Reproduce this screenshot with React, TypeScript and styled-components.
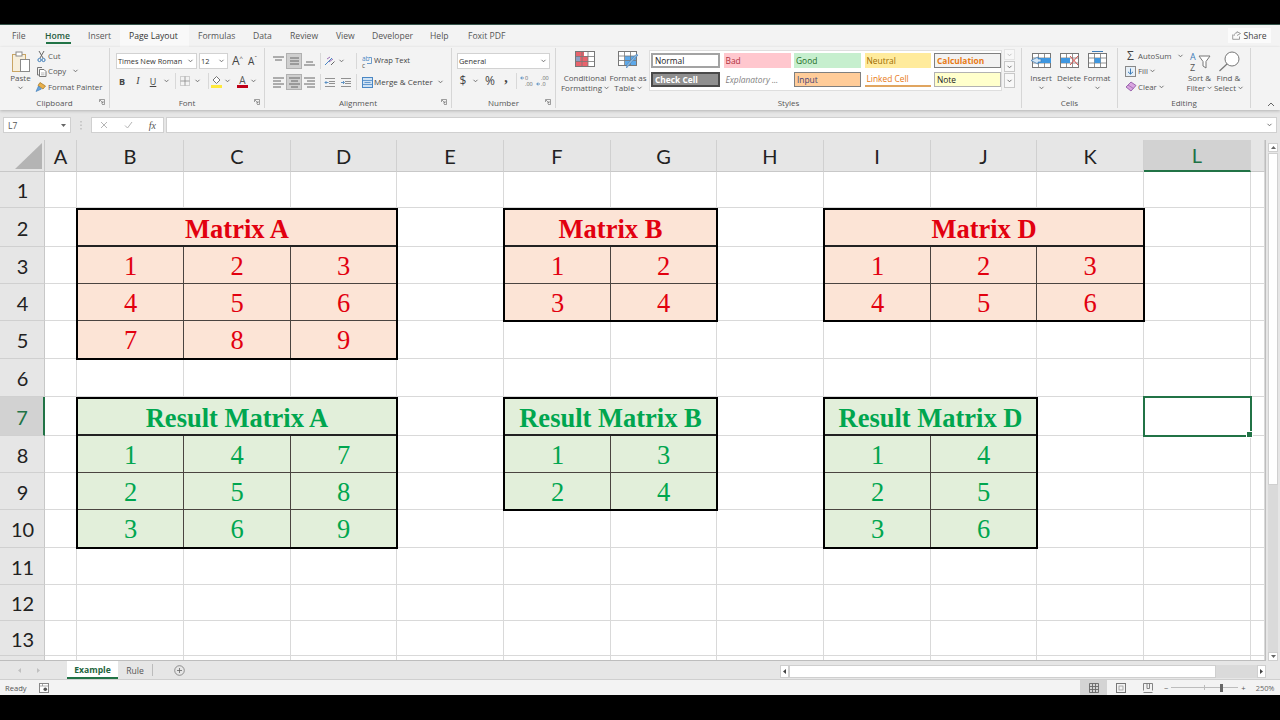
import React from "react";
import styled, { createGlobalStyle } from "styled-components";

const UI_FONT = `"Open Sans", "Noto Sans", sans-serif`;

const GlobalStyle = createGlobalStyle`
  html, body {
    margin: 0;
    padding: 0;
    background: #000;
    overflow: hidden;
  }
  * {
    box-sizing: border-box;
  }
`;

const Page = styled.div`
  width: 1280px;
  height: 720px;
  background: #000;
  padding: 24px 0 25px;
  display: flex;
  flex-direction: column;
  overflow: hidden;
  font-family: ${UI_FONT};
  font-size: 8.5px;
  color: #444;
`;

/* ---------- tabs ---------- */

const TabRow = styled.div`
  height: 23px;
  flex: none;
  background: #f3f3f3;
  border-top: 1px solid #35544a;
  padding-left: 2.5px;
  display: flex;
  align-items: stretch;
  position: relative;
`;

const Tab = styled.div<{ $w: number; $active?: boolean; $hover?: boolean }>`
  width: ${(p) => p.$w}px;
  padding-left: 9.5px;
  display: flex;
  align-items: center;
  font-size: 8.6px;
  white-space: nowrap;
  position: relative;
  color: ${(p) => (p.$active ? "#1f5c3c" : p.$hover ? "#333" : "#555")};
  background: ${(p) => (p.$hover ? "#f9f9f9" : "transparent")};
  font-weight: ${(p) => (p.$active ? 600 : 400)};

  ${(p) =>
    p.$active &&
    `&::after {
      content: "";
      position: absolute;
      left: 10px;
      width: 25px;
      top: 17px;
      height: 2px;
      background: #217346;
    }`}
`;

const ShareButton = styled.div`
  position: absolute;
  right: 9px;
  top: 3px;
  width: 43px;
  height: 15px;
  background: #fbfbfb;
  color: #444;
  display: flex;
  align-items: center;
  justify-content: center;
  gap: 2px;
  font-size: 8.6px;
`;

/* ---------- ribbon ---------- */

const Ribbon = styled.div`
  height: 63px;
  flex: none;
  background: #f3f3f3;
  padding: 1px 0 2px;
  display: flex;
  position: relative;
  z-index: 2;
  box-shadow: 0 1px 3px rgba(0, 0, 0, 0.22);
`;

const Group = styled.section<{ $w: number; $last?: boolean }>`
  width: ${(p) => p.$w}px;
  flex: none;
  display: flex;
  flex-direction: column;
  position: relative;
  border-right: ${(p) => (p.$last ? "none" : "1px solid #d6d6d6")};
`;

const GroupBody = styled.div<{ $pad?: number }>`
  flex: 1;
  min-height: 0;
  display: flex;
  padding-left: ${(p) => p.$pad ?? 0}px;
`;

const GroupLabel = styled.div`
  height: 11px;
  flex: none;
  line-height: 12px;
  text-align: center;
  color: #555;
  font-size: 8px;
  position: relative;
`;

const Launcher = styled.svg`
  position: absolute;
  right: 4px;
  top: 2px;
`;

const Stack = styled.div<{ $top?: number; $gap?: number }>`
  display: flex;
  flex-direction: column;
  padding-top: ${(p) => p.$top ?? 5}px;
  gap: ${(p) => p.$gap ?? 5}px;
`;

const Row = styled.div<{ $h?: number }>`
  display: flex;
  align-items: center;
  height: ${(p) => p.$h ?? 16}px;
  white-space: nowrap;
`;

const Slot = styled.span<{ $w: number; $on?: boolean }>`
  width: ${(p) => p.$w}px;
  height: 16px;
  flex: none;
  display: flex;
  align-items: center;
  justify-content: center;
  background: ${(p) => (p.$on ? "#cfcfcf" : "transparent")};
  border: ${(p) => (p.$on ? "1px solid #b0b0b0" : "none")};
`;

const Divider = styled.span`
  width: 1px;
  height: 16px;
  flex: none;
  background: #d8d8d8;
`;

const BigButton = styled.div<{ $w: number }>`
  width: ${(p) => p.$w}px;
  flex: none;
  display: flex;
  flex-direction: column;
  align-items: center;
  padding-top: 3px;
  text-align: center;
  line-height: 10px;
  font-size: 8px;
  color: #555;
  white-space: nowrap;
`;

const BigIcon = styled.div`
  height: 20px;
  margin-bottom: 2px;
  display: flex;
  align-items: flex-start;
`;

const LabelLine = styled.div`
  height: 10px;
  display: flex;
  align-items: center;
  justify-content: center;
  gap: 2px;
`;

const SmallTools = styled.div<{ $w: number; $left?: number }>`
  width: ${(p) => p.$w}px;
  flex: none;
  margin-left: ${(p) => p.$left ?? 0}px;
  display: flex;
  flex-direction: column;
`;

const SmallTool = styled.div`
  height: 15.5px;
  display: flex;
  align-items: center;
  gap: 2px;
  white-space: nowrap;
  font-size: 7.8px;
  color: #555;
`;

const SelectBox = styled.div<{ $w: number }>`
  width: ${(p) => p.$w}px;
  height: 16px;
  background: #fff;
  border: 1px solid #d2d2d2;
  margin-right: 2px;
  padding: 0 3px 0 1px;
  display: flex;
  align-items: center;
  justify-content: space-between;
  color: #333;
  font-size: 7.4px;
  white-space: nowrap;
  overflow: hidden;
`;

const Glyph = styled.span<{ $size?: number; $bold?: boolean; $italic?: boolean; $under?: boolean; $serif?: boolean; $lift?: number }>`
  font-size: ${(p) => p.$size ?? 9}px;
  font-weight: ${(p) => (p.$bold ? 700 : 400)};
  font-style: ${(p) => (p.$italic ? "italic" : "normal")};
  text-decoration: ${(p) => (p.$under ? "underline" : "none")};
  font-family: ${(p) => (p.$serif ? `"Liberation Serif", serif` : UI_FONT)};
  color: #444;
  line-height: 1;
  position: relative;
  top: ${(p) => p.$lift ?? 0}px;
`;

const Gallery = styled.div`
  width: 353px;
  height: 41px;
  margin-top: 2px;
  background: #fff;
  border: 1px solid #dedede;
  padding: 2px 0 0 1px;
  display: grid;
  grid-template-columns: 69px 67px 67px 66px 67px;
  grid-auto-rows: 15px;
  column-gap: 3.5px;
  row-gap: 4px;
`;

type Look = "normal" | "bad" | "good" | "neutral" | "calc" | "check" | "expl" | "input" | "linked" | "note";

const looks: Record<Look, string> = {
  normal: "background:#fff;color:#222;border:2px solid #a3a3a3;",
  bad: "background:#ffc7ce;color:#b0303c;",
  good: "background:#c6efce;color:#1c6b24;",
  neutral: "background:#ffeb9c;color:#9c6a00;",
  calc: "background:#f2f2f2;color:#e87a14;font-weight:700;border:1px solid #7f7f7f;",
  check: "background:#8f8f8f;color:#fff;font-weight:700;border:2px solid #4a4a4a;",
  expl: "background:#fff;color:#7f7f7f;font-style:italic;",
  input: "background:#ffcc99;color:#3f3f76;border:1px solid #7f7f7f;",
  linked: "background:#fff;color:#e87a14;border-bottom:2px solid #e0a560;",
  note: "background:#ffffcc;color:#222;border:1px solid #b2b2b2;",
};

const StyleCell = styled.div<{ $look: Look }>`
  font-size: 8.4px;
  padding-left: 2px;
  display: flex;
  align-items: center;
  white-space: nowrap;
  overflow: hidden;
  ${(p) => looks[p.$look]}
`;

const GalleryScroll = styled.div`
  width: 11px;
  margin: 1px 0 0 2px;
  display: flex;
  flex-direction: column;
  gap: 1px;
`;

const GalleryBtn = styled.div<{ $h: number; $dim?: boolean }>`
  height: ${(p) => p.$h}px;
  background: #f8f8f8;
  border: 1px solid ${(p) => (p.$dim ? "#e4e4e4" : "#c8c8c8")};
  display: flex;
  align-items: center;
  justify-content: center;
`;

const Collapse = styled.div`
  flex: 1;
  display: flex;
  align-items: flex-end;
  justify-content: flex-end;
  padding: 0 5px 1px 0;
`;

/* ---------- formula bar ---------- */

const FormulaBar = styled.div`
  height: 30px;
  flex: none;
  background: #e6e6e6;
  padding: 7px 3px 7px 3px;
  display: flex;
  align-items: stretch;
`;

const FieldBox = styled.div<{ $w?: number }>`
  ${(p) => (p.$w ? `width:${p.$w}px;flex:none;` : "flex:1;")}
  background: #fff;
  border: 1px solid #d0d0d0;
  display: flex;
  align-items: center;
  justify-content: space-between;
  padding: 0 4px;
  color: #555;
  font-size: 8.5px;
`;

const FxBox = styled(FieldBox)`
  margin-right: 2px;
`;

const GripSlot = styled.div`
  width: 20px;
  flex: none;
  display: flex;
  align-items: center;
  justify-content: center;
`;

const FxTools = styled.div`
  width: 100%;
  padding: 0 3px 0 4px;
  display: flex;
  justify-content: space-between;
  align-items: center;
`;

const FxText = styled.span`
  font-family: "Liberation Serif", serif;
  font-style: italic;
  font-size: 10px;
  color: #555;
`;

/* ---------- sheet ---------- */

const SheetArea = styled.div`
  flex: 1;
  min-height: 0;
  display: flex;
  background: #e6e6e6;
`;

const SheetGrid = styled.div`
  width: 1266px;
  height: 521px;
  flex: none;
  display: grid;
  grid-template-columns: 45px 32px 107px 107px 106px 107px 107px 106px 107px 107px 106px 107px 107px 14px;
  grid-template-rows: 32px 36px 39px 37px 37px 38px 38px 39px 37px 37px 38px 37px 36px 35px 5px;
  background: #fff;
  border-right: 1px solid #bdbdbd;
  border-bottom: 1px solid #bdbdbd;
  overflow: hidden;
`;

const Corner = styled.div`
  grid-column: 1;
  grid-row: 1;
  background: #e6e6e6;
  border-right: 1px solid #c8c8c8;
  border-bottom: 1px solid #c8c8c8;
  display: flex;
  align-items: flex-end;
  justify-content: flex-end;
  padding: 0 2px 2px 0;
`;

const ColHead = styled.div<{ $col: number; $on?: boolean }>`
  grid-column: ${(p) => p.$col};
  grid-row: 1;
  background: ${(p) => (p.$on ? "#d2d2d2" : "#e6e6e6")};
  color: ${(p) => (p.$on ? "#217346" : "#222")};
  border-right: 1px solid ${(p) => (p.$on ? "#d2d2d2" : "#d0d0d0")};
  border-bottom: ${(p) => (p.$on ? "2px solid #217346" : "1px solid #c8c8c8")};
  font-family: Lato, "Open Sans", sans-serif;
  font-size: 20px;
  display: flex;
  align-items: center;
  justify-content: center;
`;

const RowHead = styled.div<{ $row: number; $on?: boolean }>`
  grid-column: 1;
  grid-row: ${(p) => p.$row};
  background: ${(p) => (p.$on ? "#d2d2d2" : "#e6e6e6")};
  color: ${(p) => (p.$on ? "#217346" : "#222")};
  border-right: ${(p) => (p.$on ? "2px solid #217346" : "1px solid #c8c8c8")};
  border-bottom: 1px solid #d0d0d0;
  font-family: Lato, "Open Sans", sans-serif;
  font-size: 20px;
  padding: 1px 0 0 1px;
  display: flex;
  align-items: center;
  justify-content: center;
`;

const BlankCell = styled.div`
  border-right: 1px solid #d9d9d9;
  border-bottom: 1px solid #d9d9d9;
`;

const SelectedCell = styled.div<{ $col: number; $row: number }>`
  grid-column: ${(p) => p.$col};
  grid-row: ${(p) => p.$row};
  margin: -1px -1px -1px -1px;
  border: 2px solid #217346;
  position: relative;
  z-index: 1;

  &::after {
    content: "";
    position: absolute;
    right: -3px;
    bottom: -3px;
    width: 5px;
    height: 5px;
    background: #217346;
    border: 1px solid #fff;
  }
`;

const tones = {
  red: { fill: "#fce4d6", ink: "#e2000f" },
  green: { fill: "#e2efda", ink: "#00a64f" },
};

type Tone = keyof typeof tones;

const Block = styled.div<{ $col: number; $row: number; $cols: number; $rows: number; $tone: Tone }>`
  grid-column: ${(p) => p.$col} / span ${(p) => p.$cols};
  grid-row: ${(p) => p.$row} / span ${(p) => p.$rows};
  margin: 0 -1px -1px -1px;
  border: 2px solid #000;
  display: grid;
  grid-template-columns: subgrid;
  grid-template-rows: subgrid;
  background: ${(p) => tones[p.$tone].fill};
  color: ${(p) => tones[p.$tone].ink};
  font-family: "Liberation Serif", "Times New Roman", serif;
  position: relative;
  z-index: 1;
`;

const BlockTitle = styled.div`
  grid-column: 1 / -1;
  font-size: 26.5px;
  font-weight: 700;
  display: flex;
  align-items: center;
  justify-content: center;
  border-bottom: 2px solid #222;
  padding-top: 3px;
`;

const BlockCell = styled.div<{ $lastCol: boolean; $lastRow: boolean }>`
  font-size: 26.5px;
  padding-top: 2px;
  display: flex;
  align-items: center;
  justify-content: center;
  border-right: ${(p) => (p.$lastCol ? "none" : "1px solid #4a4440")};
  border-bottom: ${(p) => (p.$lastRow ? "none" : "1px solid #4a4440")};
`;

const VScroll = styled.div`
  flex: 1;
  padding: 3px 2px 0 2px;
  display: flex;
  flex-direction: column;
`;

const VButton = styled.div`
  height: 9px;
  flex: none;
  background: #fff;
  border: 1px solid #cfcfcf;
  display: flex;
  align-items: center;
  justify-content: center;
`;

const VThumb = styled.div`
  height: 332px;
  flex: none;
  background: #fff;
  border: 1px solid #d0d0d0;
  margin-top: 1px;
`;

const VTrack = styled.div`
  height: 167px;
  flex: none;
  background: #dadada;
`;

/* ---------- sheet tabs + status ---------- */

const TabBar = styled.div`
  height: 19px;
  flex: none;
  background: #e6e6e6;
  border-bottom: 1px solid #cfcfcf;
  display: flex;
  align-items: stretch;
`;

const SheetTabs = styled.div`
  width: 780px;
  flex: none;
  display: flex;
  align-items: stretch;
`;

const ArrowSlot = styled.div`
  width: 19px;
  display: flex;
  align-items: center;
  justify-content: center;
`;

const ArrowSpacer = styled.div<{ $w: number }>`
  width: ${(p) => p.$w}px;
`;

const SheetTab = styled.div<{ $on?: boolean }>`
  width: ${(p) => (p.$on ? 51 : 34)}px;
  background: ${(p) => (p.$on ? "#fff" : "transparent")};
  color: ${(p) => (p.$on ? "#1f6640" : "#555")};
  font-weight: ${(p) => (p.$on ? 700 : 400)};
  border-bottom: ${(p) => (p.$on ? "2px solid #217346" : "none")};
  font-size: 8.6px;
  padding-top: 2px;
  display: flex;
  align-items: center;
  justify-content: center;
`;

const TabSep = styled.div`
  width: 1px;
  margin: 3px 0 3px;
  background: #bcbcbc;
`;

const AddSheet = styled.div`
  margin-left: 21px;
  padding-top: 1px;
  display: flex;
  align-items: center;
`;

const HScroll = styled.div`
  width: 486px;
  flex: none;
  padding: 4px 0 1px;
  display: flex;
  align-items: stretch;
`;

const HButton = styled.div`
  width: 9px;
  flex: none;
  background: #fff;
  border: 1px solid #cfcfcf;
  display: flex;
  align-items: center;
  justify-content: center;
`;

const HThumb = styled.div`
  width: 427px;
  flex: none;
  background: #fff;
  border: 1px solid #cfcfcf;
`;

const HTrack = styled.div`
  width: 41px;
  flex: none;
  background: #dadada;
`;

const StatusBar = styled.div`
  height: 15px;
  flex: none;
  background: #f3f3f3;
  display: flex;
  align-items: stretch;
  color: #555;
  font-size: 7.6px;
`;

const StatusLeft = styled.div`
  width: 1080px;
  flex: none;
  padding-left: 5px;
  display: flex;
  align-items: center;
  gap: 12px;
`;

const ViewBtn = styled.div<{ $on?: boolean }>`
  width: 27px;
  flex: none;
  display: flex;
  align-items: center;
  justify-content: center;
  background: ${(p) => (p.$on ? "#d4d4d4" : "transparent")};
`;

const ZoomSlider = styled.div`
  flex: 1;
  display: flex;
  align-items: center;
  padding-left: 3px;
  gap: 3px;
`;

const ZoomValue = styled.span`
  margin-left: 7px;
  font-size: 7.4px;
  color: #666;
`;

const ZoomTrack = styled.div`
  width: 67px;
  height: 1px;
  background: #bdbdbd;
  position: relative;

  &::before {
    content: "";
    position: absolute;
    left: 33px;
    top: -2px;
    width: 1px;
    height: 5px;
    background: #bdbdbd;
  }
  &::after {
    content: "";
    position: absolute;
    left: 49px;
    top: -3.5px;
    width: 3px;
    height: 8px;
    background: #666;
  }
`;

/* ---------- icons ---------- */

const Ic = ({ w, h, children }: { w: number; h: number; children: React.ReactNode }) => (
  <svg width={w} height={h} viewBox={`0 0 ${w} ${h}`} fill="none" style={{ display: "block", flex: "none", overflow: "visible" }}>
    {children}
  </svg>
);

const Chevron = ({ color = "#666" }: { color?: string }) => (
  <Ic w={5} h={4}>
    <path d="M.5 .8 2.5 2.8 4.5 .8" stroke={color} strokeWidth=".9" />
  </Ic>
);

const CornerMark = () => (
  <Launcher width="6" height="6" viewBox="0 0 6 6" fill="none">
    <path d="M.5 3V.5H5.5V5.5H3M1 1 4 4M4 2V4H2" stroke="#777" strokeWidth=".7" />
  </Launcher>
);

const Lines = ({ rows }: { rows: [number, number, number][] }) => (
  <Ic w={11} h={12}>
    {rows.map(([a, b, y]) => (
      <path key={y} d={`M${a} ${y}H${b}`} stroke="#666" strokeWidth="1" />
    ))}
  </Ic>
);

const PasteIcon = () => (
  <Ic w={20} h={21}>
    <rect x="1.5" y="3.5" width="13" height="17" fill="#f7efdc" stroke="#c9a564" />
    <rect x="5" y="1" width="6" height="4" fill="#fff" stroke="#8a8a8a" />
    <rect x="9.5" y="8.5" width="9" height="12" fill="#fff" stroke="#8a8a8a" />
  </Ic>
);

const ScissorsIcon = () => (
  <Ic w={9} h={12}>
    <path d="M2 1 6 8M7 1 3 8" stroke="#666" />
    <circle cx="2.5" cy="10" r="1.6" stroke="#3b7bb8" />
    <circle cx="6.5" cy="10" r="1.6" stroke="#3b7bb8" />
  </Ic>
);

const CopyIcon = () => (
  <Ic w={11} h={11}>
    <path d="M6 1.5H1.5V9H3.5" stroke="#777" />
    <path d="M3.5 3.5H8L10 5.5V10.5H3.5Z" fill="#fff" stroke="#777" />
    <path d="M5 7H8.5M5 8.8H8.5" stroke="#999" strokeWidth=".7" />
  </Ic>
);

const PainterIcon = () => (
  <Ic w={12} h={11}>
    <path d="M5 1.5 10.5 5 8 8 3 4.5Z" fill="#e9b04c" stroke="#a07420" strokeWidth=".7" />
    <path d="M3.5 5 1 10.5 6.5 8Z" fill="#6aa3d8" stroke="#3b7bb8" strokeWidth=".6" />
  </Ic>
);

const BordersIcon = () => (
  <Ic w={10} h={10}>
    <rect x=".5" y=".5" width="9" height="9" stroke="#aaa" strokeDasharray="1 1" />
    <path d="M5 .5V9.5M.5 5H9.5" stroke="#888" strokeWidth=".8" />
  </Ic>
);

const FillIcon = () => (
  <Ic w={11} h={13}>
    <path d="M5.5 1.5 9 5 5.5 8.5 2 5Z" fill="#fff" stroke="#666" strokeWidth=".9" />
    <rect x="0" y="10" width="11" height="3" fill="#ffe93b" />
  </Ic>
);

const FontColorIcon = () => (
  <Ic w={11} h={13}>
    <text x="5.5" y="8.5" textAnchor="middle" fontSize="10" fontFamily="Open Sans" fill="#555">
      A
    </text>
    <rect x="0" y="10" width="11" height="3" fill="#c00018" />
  </Ic>
);

const OrientIcon = () => (
  <Ic w={12} h={11}>
    <path d="M1 9 8 2" stroke="#4a87c4" strokeWidth="1" />
    <path d="M3 3 6 1M5 6 9 3" stroke="#9c6fb5" strokeWidth="1" />
    <path d="M7 9 10.5 5.5" stroke="#666" strokeWidth="1" />
  </Ic>
);

const IndentIcon = ({ flip }: { flip?: boolean }) => (
  <Ic w={10} h={9}>
    <path d="M0 .5H10M4 3.5H10M4 5.5H10M0 8.5H10" stroke="#777" strokeWidth=".8" />
    <path d={flip ? "M0 4.5H3M2 3 3.5 4.5 2 6" : "M3.5 4.5H0M1.5 3 0 4.5 1.5 6"} stroke="#3b7bb8" strokeWidth=".8" />
  </Ic>
);

const WrapIcon = () => (
  <Ic w={11} h={13}>
    <text x="0" y="6" fontSize="6.5" fontFamily="Open Sans" fill="#4a87c4">
      ab
    </text>
    <text x="0" y="12.5" fontSize="6.5" fontFamily="Open Sans" fill="#555">
      c
    </text>
    <path d="M7 2.5H9.5V8.5H5" stroke="#4a87c4" strokeWidth=".8" />
  </Ic>
);

const MergeIcon = () => (
  <Ic w={11} h={11}>
    <rect x=".5" y=".5" width="10" height="10" fill="#cfe2f3" stroke="#4a87c4" />
    <path d="M.5 3.5H10.5M.5 7.5H10.5M2.5 5.5H8.5" stroke="#4a87c4" strokeWidth=".8" />
  </Ic>
);

const DecimalIcon = ({ more }: { more?: boolean }) => (
  <Ic w={12} h={12}>
    <text x="5" y="5" fontSize="5.5" fontFamily="Open Sans" fill="#666">
      {more ? ".00" : "0"}
    </text>
    <text x="5" y="11" fontSize="5.5" fontFamily="Open Sans" fill="#666">
      {more ? ".0" : ".00"}
    </text>
    <path d="M1 3H4M2 1.5 .7 3 2 4.5" stroke="#3b7bb8" strokeWidth=".8" transform={more ? "translate(0 6)" : undefined} />
  </Ic>
);

const CondFormatIcon = () => (
  <Ic w={20} h={16}>
    <rect x=".5" y=".5" width="19" height="15" fill="#fff" stroke="#777" />
    <rect x="1" y="1" width="8" height="4" fill="#e8636c" />
    <rect x="5" y="5" width="8" height="5" fill="#e8636c" />
    <rect x="1" y="5" width="4" height="5" fill="#8f9fc4" />
    <rect x="1" y="10" width="12" height="5" fill="#e8636c" />
    <path d="M7 .5V15.5M13 .5V15.5M.5 5.5H19.5M.5 10.5H19.5" stroke="#777" strokeWidth=".8" />
  </Ic>
);

const FormatTableIcon = () => (
  <Ic w={21} h={18}>
    <rect x=".5" y=".5" width="18" height="14" fill="#fff" stroke="#777" />
    <rect x="7" y="5" width="11" height="9" fill="#5da9ea" />
    <path d="M6.5 .5V14.5M12.5 .5V14.5M.5 5H18.5M.5 9.5H18.5" stroke="#777" strokeWidth=".8" />
    <path d="M20 4 11 14 8.5 17 9 13.5 18 3.5Z" fill="#8fb8d8" stroke="#4a87c4" strokeWidth=".7" />
  </Ic>
);

const CellsIcon = ({ kind }: { kind: "insert" | "delete" | "format" }) => (
  <Ic w={22} h={18}>
    <rect x="2.5" y="2.5" width="18" height="14" fill="#fff" stroke="#777" />
    <path d="M8.5 2.5V16.5M14.5 2.5V16.5M2.5 7H20.5M2.5 12H20.5" stroke="#777" strokeWidth=".8" />
    {kind === "insert" && <rect x="6" y="7" width="15" height="5" fill="#3f97e0" />}
    {kind === "insert" && <path d="M8 6 1 9.5 8 13V11H11V8H8Z" fill="#d6e8f7" stroke="#3b7bb8" strokeWidth=".7" />}
    {kind === "delete" && <rect x="3" y="7" width="9" height="5" fill="#3f97e0" />}
    {kind === "delete" && <path d="M12 5 20 14M20 5 12 14" stroke="#d9534f" strokeWidth="1" />}
    {kind === "format" && <rect x="8.5" y="7" width="6" height="5" fill="#3f97e0" />}
    {kind === "format" && <path d="M6 .5H17" stroke="#3b7bb8" strokeWidth="1" />}
  </Ic>
);

const FillDownIcon = () => (
  <Ic w={11} h={11}>
    <rect x=".5" y=".5" width="10" height="10" fill="#e6eff7" stroke="#888" />
    <path d="M5.5 2.5V8M3 5.8 5.5 8.2 8 5.8" stroke="#3b7bb8" />
  </Ic>
);

const EraserIcon = () => (
  <Ic w={12} h={11}>
    <path d="M1 6 6 1 11 4.5 6 10Z" fill="#d9a5e0" stroke="#8a4fa0" strokeWidth=".8" />
    <path d="M3 4 8.5 7.5" stroke="#8a4fa0" strokeWidth=".6" />
  </Ic>
);

const SortIcon = () => (
  <Ic w={22} h={21}>
    <text x="1" y="9" fontSize="9" fontFamily="Open Sans" fill="#3b7bb8">
      A
    </text>
    <text x="1" y="20" fontSize="9" fontFamily="Open Sans" fill="#555">
      Z
    </text>
    <path d="M10 5H21L17 10.5V17L14 15V10.5Z" fill="#fff" stroke="#777" />
  </Ic>
);

const FindIcon = () => (
  <Ic w={22} h={21}>
    <circle cx="14" cy="8" r="7" fill="#fff" stroke="#777" />
    <path d="M9 13 1.5 20" stroke="#777" strokeWidth="1.2" />
  </Ic>
);

const ShareIcon = () => (
  <Ic w={9} h={9}>
    <path d="M5 4.5 8.5 2.5 5 .7V1.7C3 2 2 3 2 5M.7 3.5V8.3H7.5V5.5" stroke="#777" strokeWidth=".7" />
  </Ic>
);

const CrossIcon = () => (
  <Ic w={8} h={8}>
    <path d="M1 1 7 7M7 1 1 7" stroke="#b5b5b5" />
  </Ic>
);

const CheckIcon = () => (
  <Ic w={9} h={8}>
    <path d="M1 4.5 3.5 7 8 1" stroke="#b5b5b5" />
  </Ic>
);

const Grip = () => (
  <Ic w={2} h={9}>
    <path d="M1 0V1.5M1 3.5V5M1 7V8.5" stroke="#aaa" />
  </Ic>
);

const Triangle = ({ dir, color = "#666", size = 5 }: { dir: "up" | "down" | "left" | "right"; color?: string; size?: number }) => {
  const d = { up: "M0 4 2.5 1 5 4Z", down: "M0 1H5L2.5 4Z", left: "M4 0V5L1 2.5Z", right: "M1 0V5L4 2.5Z" }[dir];
  return (
    <svg width={size} height={size} viewBox="0 0 5 5" style={{ display: "block" }}>
      <path d={d} fill={color} />
    </svg>
  );
};

const CornerTriangle = () => (
  <Ic w={27} h={26}>
    <path d="M27 0V26H0Z" fill="#b4b4b4" />
  </Ic>
);

const MacroIcon = () => (
  <Ic w={10} h={10}>
    <rect x=".5" y=".5" width="9" height="9" fill="#fff" stroke="#888" />
    <path d="M.5 3H9.5M3.5 .5V3" stroke="#888" strokeWidth=".7" />
    <circle cx="6.3" cy="6.3" r="1.8" fill="#555" />
  </Ic>
);

const NormalViewIcon = () => (
  <Ic w={10} h={10}>
    <path d="M.5 .5H9.5V9.5H.5ZM3.5 .5V9.5M6.5 .5V9.5M.5 3.5H9.5M.5 6.5H9.5" stroke="#666" strokeWidth=".9" />
  </Ic>
);

const PageViewIcon = () => (
  <Ic w={10} h={10}>
    <rect x=".5" y=".5" width="9" height="9" stroke="#777" />
    <rect x="3" y="3" width="4" height="4" stroke="#999" strokeWidth=".8" />
  </Ic>
);

const BreakViewIcon = () => (
  <Ic w={10} h={10}>
    <path d="M.5 7.5V.5H9.5V7.5M.5 9.5H9.5M4 .5V5.5H6.5V.5" stroke="#777" strokeWidth=".9" />
  </Ic>
);

const AddIcon = () => (
  <Ic w={11} h={11}>
    <circle cx="5.5" cy="5.5" r="4.8" stroke="#777" strokeWidth=".8" />
    <path d="M5.5 3V8M3 5.5H8" stroke="#666" strokeWidth=".8" />
  </Ic>
);

/* ---------- data ---------- */

const ribbonTabs: [string, number][] = [
  ["File", 33],
  ["Home", 43],
  ["Insert", 41],
  ["Page Layout", 69],
  ["Formulas", 55],
  ["Data", 37],
  ["Review", 46],
  ["View", 36],
  ["Developer", 58],
  ["Help", 38],
  ["Foxit PDF", 60],
];

const galleryCells: [string, Look][] = [
  ["Normal", "normal"],
  ["Bad", "bad"],
  ["Good", "good"],
  ["Neutral", "neutral"],
  ["Calculation", "calc"],
  ["Check Cell", "check"],
  ["Explanatory ...", "expl"],
  ["Input", "input"],
  ["Linked Cell", "linked"],
  ["Note", "note"],
];

const columns = ["A", "B", "C", "D", "E", "F", "G", "H", "I", "J", "K", "L", ""];
const rowHeads = ["1", "2", "3", "4", "5", "6", "7", "8", "9", "10", "11", "12", "13", ""];

const matrices: { title: string; col: number; row: number; tone: Tone; values: number[][] }[] = [
  { title: "Matrix A", col: 3, row: 3, tone: "red", values: [[1, 2, 3], [4, 5, 6], [7, 8, 9]] },
  { title: "Matrix B", col: 7, row: 3, tone: "red", values: [[1, 2], [3, 4]] },
  { title: "Matrix D", col: 10, row: 3, tone: "red", values: [[1, 2, 3], [4, 5, 6]] },
  { title: "Result Matrix A", col: 3, row: 8, tone: "green", values: [[1, 4, 7], [2, 5, 8], [3, 6, 9]] },
  { title: "Result Matrix B", col: 7, row: 8, tone: "green", values: [[1, 3], [2, 4]] },
  { title: "Result Matrix D", col: 10, row: 8, tone: "green", values: [[1, 4], [2, 5], [3, 6]] },
];

const occupied = matrices.reduce((n, m) => n + m.values[0].length * (m.values.length + 1), 0);
const blankCount = 13 * 14 - occupied - 1;

const Matrix = ({ title, col, row, tone, values }: (typeof matrices)[number]) => {
  const cols = values[0].length;
  return (
    <Block $col={col} $row={row} $cols={cols} $rows={values.length + 1} $tone={tone}>
      <BlockTitle>{title}</BlockTitle>
      {values.flatMap((line, r) =>
        line.map((v, c) => (
          <BlockCell key={`${r}-${c}`} $lastCol={c === cols - 1} $lastRow={r === values.length - 1}>
            {v}
          </BlockCell>
        ))
      )}
    </Block>
  );
};

const LargeTool = ({ w, icon, lines }: { w: number; icon: React.ReactNode; lines: React.ReactNode[] }) => (
  <BigButton $w={w}>
    <BigIcon>{icon}</BigIcon>
    {lines.map((l, i) => (
      <LabelLine key={i}>{l}</LabelLine>
    ))}
  </BigButton>
);

export default function App() {
  return (
    <Page>
      <GlobalStyle />

      <TabRow>
        {ribbonTabs.map(([label, w]) => (
          <Tab key={label} $w={w} $active={label === "Home"} $hover={label === "Page Layout"}>
            {label}
          </Tab>
        ))}
        <ShareButton>
          <ShareIcon />
          Share
        </ShareButton>
      </TabRow>

      <Ribbon>
        <Group $w={110}>
          <GroupBody $pad={9}>
            <LargeTool w={23} icon={<PasteIcon />} lines={["Paste", <Chevron key="c" />]} />
            <SmallTools $w={70} $left={4}>
              <SmallTool>
                <Slot $w={10}>
                  <ScissorsIcon />
                </Slot>
                Cut
              </SmallTool>
              <SmallTool>
                <Slot $w={10}>
                  <CopyIcon />
                </Slot>
                Copy
                <Slot $w={14}>
                  <Chevron />
                </Slot>
              </SmallTool>
              <SmallTool>
                <Slot $w={10}>
                  <PainterIcon />
                </Slot>
                Format Painter
              </SmallTool>
            </SmallTools>
          </GroupBody>
          <GroupLabel>
            Clipboard
            <CornerMark />
          </GroupLabel>
        </Group>

        <Group $w={155}>
          <GroupBody $pad={6}>
            <Stack $gap={4}>
              <Row>
                <SelectBox $w={81}>
                  Times New Roman
                  <Chevron />
                </SelectBox>
                <SelectBox $w={29}>
                  12
                  <Chevron />
                </SelectBox>
                <Slot $w={15}>
                  <Glyph $size={12}>A</Glyph>
                  <Glyph $size={6} $lift={-3}>^</Glyph>
                </Slot>
                <Slot $w={15}>
                  <Glyph $size={10}>A</Glyph>
                  <Glyph $size={6} $lift={-3}>ˇ</Glyph>
                </Slot>
              </Row>
              <Row>
                <Slot $w={12}>
                  <Glyph $bold $size={9}>B</Glyph>
                </Slot>
                <Slot $w={20}>
                  <Glyph $italic $serif $size={10}>I</Glyph>
                </Slot>
                <Slot $w={10}>
                  <Glyph $under $size={9}>U</Glyph>
                </Slot>
                <Slot $w={16}>
                  <Chevron />
                </Slot>
                <Slot $w={2}>
                  <Divider />
                </Slot>
                <Slot $w={18}>
                  <BordersIcon />
                </Slot>
                <Slot $w={6}>
                  <Chevron />
                </Slot>
                <Slot $w={7} />
                <Slot $w={2}>
                  <Divider />
                </Slot>
                <Slot $w={2} />
                <Slot $w={11}>
                  <FillIcon />
                </Slot>
                <Slot $w={10}>
                  <Chevron />
                </Slot>
                <Slot $w={20}>
                  <FontColorIcon />
                </Slot>
                <Slot $w={3}>
                  <Chevron />
                </Slot>
              </Row>
            </Stack>
          </GroupBody>
          <GroupLabel>
            Font
            <CornerMark />
          </GroupLabel>
        </Group>

        <Group $w={187}>
          <GroupBody $pad={6}>
            <Stack>
              <Row>
                <Slot $w={15}>
                  <Lines rows={[[0, 11, 2], [2, 9, 5]]} />
                </Slot>
                <Slot $w={16} $on>
                  <Lines rows={[[1, 10, 3], [1, 10, 6], [1, 10, 9]]} />
                </Slot>
                <Slot $w={15}>
                  <Lines rows={[[2, 9, 7], [0, 11, 10]]} />
                </Slot>
                <Slot $w={6}>
                  <Divider />
                </Slot>
                <Slot $w={14}>
                  <OrientIcon />
                </Slot>
                <Slot $w={8}>
                  <Chevron />
                </Slot>
                <Slot $w={10} />
                <Slot $w={2}>
                  <Divider />
                </Slot>
                <Slot $w={4} />
                <Slot $w={13}>
                  <WrapIcon />
                </Slot>
                <Glyph $size={7.6}>Wrap Text</Glyph>
              </Row>
              <Row>
                <Slot $w={15}>
                  <Lines rows={[[0, 11, 2], [0, 8, 5], [0, 11, 8], [0, 8, 11]]} />
                </Slot>
                <Slot $w={16} $on>
                  <Lines rows={[[0, 11, 2], [2, 9, 5], [0, 11, 8], [2, 9, 11]]} />
                </Slot>
                <Slot $w={15}>
                  <Lines rows={[[0, 11, 2], [3, 11, 5], [0, 11, 8], [3, 11, 11]]} />
                </Slot>
                <Slot $w={6}>
                  <Divider />
                </Slot>
                <Slot $w={14}>
                  <IndentIcon />
                </Slot>
                <Slot $w={18}>
                  <IndentIcon flip />
                </Slot>
                <Slot $w={2}>
                  <Divider />
                </Slot>
                <Slot $w={4} />
                <Slot $w={13}>
                  <MergeIcon />
                </Slot>
                <Glyph $size={8}>Merge &amp; Center</Glyph>
                <Slot $w={16}>
                  <Chevron />
                </Slot>
              </Row>
            </Stack>
          </GroupBody>
          <GroupLabel>
            Alignment
            <CornerMark />
          </GroupLabel>
        </Group>

        <Group $w={104}>
          <GroupBody $pad={5}>
            <Stack $gap={4}>
              <Row>
                <SelectBox $w={93}>
                  General
                  <Chevron />
                </SelectBox>
              </Row>
              <Row>
                <Slot $w={12}>
                  <Glyph $size={12}>$</Glyph>
                </Slot>
                <Slot $w={12}>
                  <Chevron />
                </Slot>
                <Slot $w={18}>
                  <Glyph $size={12}>%</Glyph>
                </Slot>
                <Slot $w={14}>
                  <Glyph $bold $serif $size={14} $lift={-3}>,</Glyph>
                </Slot>
                <Slot $w={6}>
                  <Divider />
                </Slot>
                <Slot $w={14}>
                  <DecimalIcon />
                </Slot>
                <Slot $w={18}>
                  <DecimalIcon more />
                </Slot>
              </Row>
            </Stack>
          </GroupBody>
          <GroupLabel>
            Number
            <CornerMark />
          </GroupLabel>
        </Group>

        <Group $w={466}>
          <GroupBody $pad={7}>
            <LargeTool
              w={44}
              icon={<CondFormatIcon />}
              lines={[
                "Conditional",
                <>
                  Formatting <Chevron />
                </>,
              ]}
            />
            <LargeTool
              w={42}
              icon={<FormatTableIcon />}
              lines={[
                "Format as",
                <>
                  Table <Chevron />
                </>,
              ]}
            />
            <Gallery>
              {galleryCells.map(([label, look]) => (
                <StyleCell key={label} $look={look}>
                  {label}
                </StyleCell>
              ))}
            </Gallery>
            <GalleryScroll>
              <GalleryBtn $h={11} $dim>
                <Chevron color="#bbb" />
              </GalleryBtn>
              <GalleryBtn $h={11}>
                <Chevron />
              </GalleryBtn>
              <GalleryBtn $h={15}>
                <Chevron />
              </GalleryBtn>
            </GalleryScroll>
          </GroupBody>
          <GroupLabel>Styles</GroupLabel>
        </Group>

        <Group $w={96}>
          <GroupBody $pad={5}>
            <LargeTool w={28} icon={<CellsIcon kind="insert" />} lines={["Insert", <Chevron key="c" />]} />
            <LargeTool w={28} icon={<CellsIcon kind="delete" />} lines={["Delete", <Chevron key="c" />]} />
            <LargeTool w={28} icon={<CellsIcon kind="format" />} lines={["Format", <Chevron key="c" />]} />
          </GroupBody>
          <GroupLabel>Cells</GroupLabel>
        </Group>

        <Group $w={133}>
          <GroupBody $pad={7}>
            <SmallTools $w={60}>
              <SmallTool>
                <Slot $w={11}>
                  <Glyph $size={12}>Σ</Glyph>
                </Slot>
                AutoSum
                <Slot $w={14}>
                  <Chevron />
                </Slot>
              </SmallTool>
              <SmallTool>
                <Slot $w={11}>
                  <FillDownIcon />
                </Slot>
                Fill
                <Chevron />
              </SmallTool>
              <SmallTool>
                <Slot $w={11}>
                  <EraserIcon />
                </Slot>
                Clear
                <Chevron />
              </SmallTool>
            </SmallTools>
            <LargeTool
              w={29}
              icon={<SortIcon />}
              lines={[
                "Sort &",
                <>
                  Filter <Chevron />
                </>,
              ]}
            />
            <LargeTool
              w={29}
              icon={<FindIcon />}
              lines={[
                "Find &",
                <>
                  Select <Chevron />
                </>,
              ]}
            />
          </GroupBody>
          <GroupLabel>Editing</GroupLabel>
        </Group>

        <Collapse>
          <Ic w={8} h={5}>
            <path d="M1 4 4 1 7 4" stroke="#666" />
          </Ic>
        </Collapse>
      </Ribbon>

      <FormulaBar>
        <FieldBox $w={68}>
          L7
          <Triangle dir="down" />
        </FieldBox>
        <GripSlot>
          <Grip />
        </GripSlot>
        <FxBox $w={73}>
          <FxTools>
            <CrossIcon />
            <CheckIcon />
            <FxText>fx</FxText>
          </FxTools>
        </FxBox>
        <FieldBox>
          <span />
          <Chevron />
        </FieldBox>
      </FormulaBar>

      <SheetArea>
        <SheetGrid>
          <Corner>
            <CornerTriangle />
          </Corner>
          {columns.map((c, i) => (
            <ColHead key={i} $col={i + 2} $on={c === "L"}>
              {c}
            </ColHead>
          ))}
          {rowHeads.map((r, i) => (
            <RowHead key={i} $row={i + 2} $on={r === "7"}>
              {r}
            </RowHead>
          ))}
          {matrices.map((m) => (
            <Matrix key={m.title} {...m} />
          ))}
          <SelectedCell $col={13} $row={8} />
          {Array.from({ length: blankCount }, (_, i) => (
            <BlankCell key={i} />
          ))}
        </SheetGrid>
        <VScroll>
          <VButton>
            <Triangle dir="up" />
          </VButton>
          <VThumb />
          <VTrack />
          <VButton>
            <Triangle dir="down" />
          </VButton>
        </VScroll>
      </SheetArea>

      <TabBar>
        <SheetTabs>
          <ArrowSpacer $w={10} />
          <ArrowSlot>
            <Triangle dir="left" color="#c0c0c0" />
          </ArrowSlot>
          <ArrowSlot>
            <Triangle dir="right" color="#c0c0c0" />
          </ArrowSlot>
          <ArrowSpacer $w={19} />
          <SheetTab $on>Example</SheetTab>
          <SheetTab>Rule</SheetTab>
          <TabSep />
          <AddSheet>
            <AddIcon />
          </AddSheet>
        </SheetTabs>
        <HScroll>
          <HButton>
            <Triangle dir="left" color="#444" />
          </HButton>
          <HThumb />
          <HTrack />
          <HButton>
            <Triangle dir="right" color="#444" />
          </HButton>
        </HScroll>
      </TabBar>

      <StatusBar>
        <StatusLeft>
          Ready
          <MacroIcon />
        </StatusLeft>
        <ViewBtn $on>
          <NormalViewIcon />
        </ViewBtn>
        <ViewBtn>
          <PageViewIcon />
        </ViewBtn>
        <ViewBtn>
          <BreakViewIcon />
        </ViewBtn>
        <ZoomSlider>
          −
          <ZoomTrack />
          +
          <ZoomValue>250%</ZoomValue>
        </ZoomSlider>
      </StatusBar>
    </Page>
  );
}
